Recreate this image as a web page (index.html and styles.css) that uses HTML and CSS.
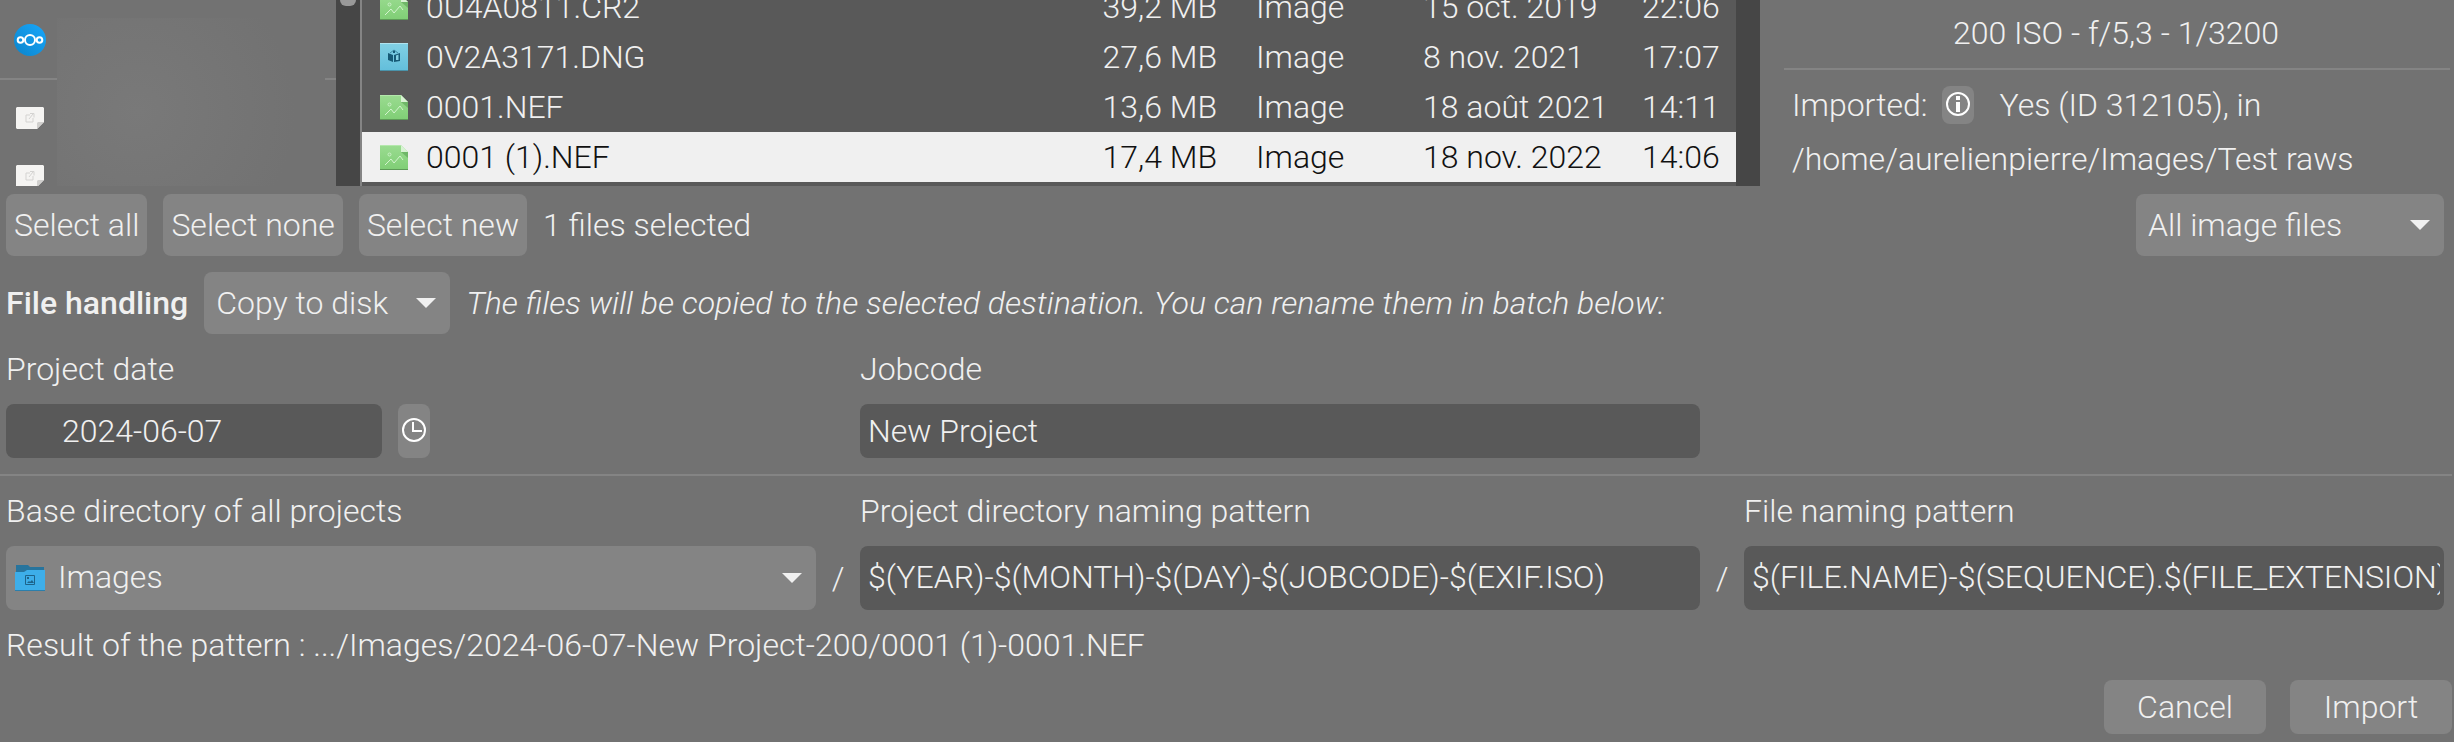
FILE: index.html
```
<!DOCTYPE html>
<html lang="en">
<head>
<meta charset="utf-8">
<title>Import</title>
<link rel="stylesheet" href="styles.css">
</head>
<body>
<svg class="defs" aria-hidden="true">
  <defs>
    <linearGradient id="green" x1="0" y1="0" x2="0" y2="1"><stop offset="0" stop-color="#9bdc91"/><stop offset="1" stop-color="#7fce75"/></linearGradient>
    <linearGradient id="cyan" x1="0" y1="0" x2="0" y2="1"><stop offset="0" stop-color="#82d0e4"/><stop offset="1" stop-color="#62bedb"/></linearGradient>
    <linearGradient id="cloud" x1="1" y1="0" x2="0" y2="1"><stop offset="0" stop-color="#18a7fb"/><stop offset="1" stop-color="#0b84cb"/></linearGradient>
    <symbol id="image-file" viewBox="0 0 28 25">
      <path fill="url(#green)" d="M0 0h21l7 7v18H0z"/>
      <path fill="#d8f3d3" d="M21 0l7 7h-7z"/>
      <path fill="#6fb768" d="M21 7h7v6z"/>
      <path fill="#b4e8ac" d="M0 0h21v1H0z"/>
      <path fill="#5d9a57" d="M0 24h28v1H0z"/>
      <circle cx="9.500" cy="9.500" r="1.500" fill="none" stroke="#c9f0c4"/>
      <path fill="none" stroke="#d3f4ce" d="M5 20l6-6 3 4 6-7 3 4"/>
    </symbol>
    <symbol id="raw-file" viewBox="0 0 28 28">
      <path fill="url(#cyan)" d="M0 0h28v28H0z"/>
      <path fill="#b0e3ef" d="M0 0h28v1H0z"/>
      <path fill="#4a93aa" d="M0 27h28v1H0z"/>
      <path fill="#165a76" d="M8 10l5 2v7l-5-2zM13 7h2v3h-2zM14 12l6-2v8l-6 1z"/>
      <path fill="#82cfe2" d="M16 12.500l2.500-1v5.500h-2.500z"/>
      <path stroke="#3e8ba4" d="M10 10l4-3 4 3" fill="none"/>
    </symbol>
    <symbol id="bookmark" viewBox="0 0 28 22">
      <path fill="#f5f4f2" d="M1 0h26l1 1v14l-7 7H1l-1-1V1z"/>
      <path fill="#d0cfcd" d="M28 15h-6l-1 1v6z"/>
      <path fill="none" stroke="#d4d3d1" d="M14 8h-4v7h7v-4M13 12l4-5M14 6.500h4v4"/>
    </symbol>
  </defs>
</svg>

<main class="dialog">
  <section class="browser">
    <aside class="places">
      <ul class="place-list">
        <li class="place place-cloud"><svg width="32" height="32" viewBox="0 0 32 32"><circle cx="16" cy="16" r="16" fill="url(#cloud)"/><g fill="none" stroke="#fff" stroke-width="2"><circle cx="16" cy="16" r="5"/><circle cx="6.500" cy="16" r="2.800"/><circle cx="25.500" cy="16" r="2.800"/></g></svg></li>
        <li class="place"><svg width="28" height="22"><use href="#bookmark"/></svg></li>
        <li class="place"><svg width="28" height="22"><use href="#bookmark"/></svg></li>
      </ul>
      <div class="redacted"></div>
      <div class="scrollbar"><span class="thumb"></span></div>
    </aside>
    <div class="files">
      <table class="file-table">
        <tbody>
          <tr><td class="icon"><svg width="28" height="25"><use href="#image-file"/></svg></td><td>0U4A0811.CR2</td><td class="size">39,2 MB</td><td class="type">Image</td><td class="date">15 oct. 2019</td><td class="time">22:06</td></tr>
          <tr><td class="icon"><svg width="28" height="28"><use href="#raw-file"/></svg></td><td>0V2A3171.DNG</td><td class="size">27,6 MB</td><td class="type">Image</td><td class="date">8 nov. 2021</td><td class="time">17:07</td></tr>
          <tr><td class="icon"><svg width="28" height="25"><use href="#image-file"/></svg></td><td>0001.NEF</td><td class="size">13,6 MB</td><td class="type">Image</td><td class="date">18 août 2021</td><td class="time">14:11</td></tr>
          <tr class="selected"><td class="icon"><svg width="28" height="25"><use href="#image-file"/></svg></td><td>0001 (1).NEF</td><td class="size">17,4 MB</td><td class="type">Image</td><td class="date">18 nov. 2022</td><td class="time">14:06</td></tr>
        </tbody>
      </table>
      <div class="scrollbar"></div>
    </div>
    <aside class="details">
      <p class="exposure">200 ISO - f/5,3 - 1/3200</p>
      <hr class="rule">
      <div class="imported">
        <span>Imported:</span>
        <button class="btn info" type="button" aria-label="Information"><svg width="24" height="24" viewBox="0 0 24 24"><circle cx="12" cy="12" r="11" fill="none" stroke="#fff" stroke-width="2"/><path fill="#fff" d="M10 4h4v4h-4zM10 10h4v10h-4z"/></svg></button>
        <span class="yes">Yes (ID 312105), in</span>
      </div>
      <p class="path">/home/aurelienpierre/Images/Test raws</p>
    </aside>
  </section>

  <section class="bar">
    <button class="btn" type="button">Select all</button>
    <button class="btn" type="button">Select none</button>
    <button class="btn" type="button">Select new</button>
    <span class="count">1 files selected</span>
    <select class="combo filter" aria-label="File type"><option>All image files</option></select>
  </section>

  <section class="bar handling">
    <label class="heading" for="mode">File handling</label>
    <select class="combo mode" id="mode"><option>Copy to disk</option></select>
    <em class="hint">The files will be copied to the selected destination. You can rename them in batch below:</em>
  </section>

  <section class="grid">
    <label class="label col-1" for="date">Project date</label>
    <label class="label col-3" for="job">Jobcode</label>
    <div class="date-field col-1">
      <input class="entry date-entry" id="date" type="text" value="2024-06-07">
      <button class="btn clock" type="button" aria-label="Choose date"><svg width="24" height="24" viewBox="0 0 24 24" fill="none" stroke="#fff" stroke-width="2"><circle cx="12" cy="12" r="11"/><path d="M11 4v9h9"/></svg></button>
    </div>
    <input class="entry col-3" id="job" type="text" value="New Project">
  </section>

  <hr class="rule wide">

  <section class="grid patterns">
    <label class="label col-1" for="base">Base directory of all projects</label>
    <label class="label col-3" for="dir">Project directory naming pattern</label>
    <label class="label col-5" for="file">File naming pattern</label>
    <div class="folder-field col-1">
      <select class="combo folder" id="base"><option>Images</option></select>
      <svg class="folder-icon" width="30" height="26" viewBox="0 0 30 26"><path fill="#27749d" d="M1 0h12l2 2h14v6H1z"/><path fill="#3daee9" d="M0 7h9l3-2h18v21H0z"/><path fill="#2b7fac" d="M0 25h30v1H0z"/><path fill="none" stroke="#1d638a" d="M10.500 10.500h9v9h-9z"/><path fill="#1d638a" d="M12 18l2-2 1 1 2-2 2 3zM12 12h2v2h-2z"/></svg>
    </div>
    <span class="slash">/</span>
    <input class="entry tall" id="dir" type="text" value="$(YEAR)-$(MONTH)-$(DAY)-$(JOBCODE)-$(EXIF.ISO)">
    <span class="slash">/</span>
    <input class="entry tall file-pattern" id="file" type="text" value="$(FILE.NAME)-$(SEQUENCE).$(FILE_EXTENSION)">
  </section>

  <p class="result">Result of the pattern : .../Images/2024-06-07-New Project-200/0001 (1)-0001.NEF</p>

  <footer class="actions">
    <button class="btn action" type="button">Cancel</button>
    <button class="btn action" type="button">Import</button>
  </footer>
</main>
</body>
</html>
```

FILE: styles.css
```
* { box-sizing: border-box; }

body {
  margin: 0;
  background: #727272;
  color: #f0f0f0;
  font: 300 32px/38px Roboto, "Noto Sans", sans-serif;
  overflow: hidden;
}

p, ul, hr { margin: 0; padding: 0; }
ul { list-style: none; }
svg { display: block; }
.defs { position: absolute; width: 0; height: 0; }

button, input, select { font: inherit; color: inherit; border: 0; margin: 0; }

.browser {
  display: grid;
  grid-template-columns: 360px minmax(0, 1fr) 670px;
  column-gap: 24px;
  height: 186px;
  overflow: hidden;
}

/* places sidebar */
.places {
  display: grid;
  grid-template-columns: 57px 1fr 24px;
  height: 186px;
  background: linear-gradient(#848484, #848484) 0 78px / 100% 2px no-repeat;
}
.place { padding: 18px 0 18px 16px; height: 58px; }
.place-cloud { height: 89px; padding: 24px 0 0 14px; }
.redacted {
  margin: 18px 11px 0 0;
  background: radial-gradient(circle at 30% 50%, #797979, #727272 75%);
}
.scrollbar { background: #464646; width: 24px; }
.thumb {
  display: block;
  width: 16px;
  height: 6px;
  margin: 0 auto;
  border-radius: 0 0 8px 8px;
  background: #999;
}

/* file list */
.files {
  display: flex;
  align-items: flex-end;
  margin-left: -24px;
  height: 186px;
  background: #595959;
  border-left: 2px solid #848484;
}
.files .scrollbar { flex: none; height: 186px; }
.file-table {
  flex: 1;
  border-collapse: collapse;
  table-layout: fixed;
  margin-bottom: 4px;
}
.file-table td { height: 50px; padding: 0; white-space: nowrap; }
.file-table .icon { width: 64px; padding-left: 18px; }
.file-table .size { width: 150px; text-align: right; }
.file-table .type { width: 206px; padding-left: 39px; }
.file-table .date { width: 219px; }
.file-table .time { width: 94px; }
.selected { background: #f0f0f0; color: #111; }

/* details */
.exposure { padding-top: 14px; text-align: center; margin-right: 6px; }
.rule { height: 2px; border: 0; background: #848484; }
.details .rule { margin: 16px 4px 0 0; }
.imported { display: flex; align-items: center; padding: 16px 0 0 8px; }
.path { padding: 16px 0 0 8px; }

.btn {
  display: flex;
  align-items: center;
  justify-content: center;
  background: #848484;
  border-radius: 8px;
  padding: 0 8px;
  height: 62px;
}
.btn.info { width: 32px; height: 38px; margin: 0 26px 0 14px; padding: 0 0 2px; }
.btn.clock { width: 32px; height: 54px; padding: 0 0 2px; }

.combo {
  appearance: none;
  height: 62px;
  padding: 0 12px;
  border-radius: 8px;
  background: #848484 url("data:image/svg+xml,%3Csvg xmlns='http://www.w3.org/2000/svg' viewBox='0 0 20 10'%3E%3Cpath fill='%23f0f0f0' d='M0 0h20L10 10z'/%3E%3C/svg%3E") right 14px center / 20px 10px no-repeat;
}

.bar { display: flex; align-items: center; gap: 16px; padding: 8px 10px 0 6px; }
.handling { padding-top: 16px; }
.filter { width: 308px; margin-left: auto; }
.mode { width: 246px; }
.heading { font-weight: 500; }

/* forms */
.grid {
  display: grid;
  grid-template-columns: 810px 44px 840px 44px minmax(0, 1fr);
  row-gap: 16px;
  padding: 16px 10px 0 6px;
  align-items: center;
}
.col-1 { grid-column: 1; }
.col-3 { grid-column: 3; }
.col-5 { grid-column: 5; }
.entry {
  width: 100%;
  height: 54px;
  padding: 0 8px;
  border-radius: 8px;
  background: #595959;
}
.date-field { display: flex; gap: 16px; }
.date-entry { width: 376px; padding-left: 56px; }
.folder-field { position: relative; }
.folder { width: 100%; padding-left: 52px; }
.folder, .tall { height: 64px; padding-bottom: 2px; }
.file-pattern { padding-right: 4px; }
.folder-icon { position: absolute; left: 9px; top: 19px; }
.slash { text-align: center; }
.wide { margin: 16px 2px 0 0; }
.result { padding: 16px 6px 0; }
.actions { display: flex; justify-content: flex-end; gap: 24px; padding: 16px 2px 8px 0; }
.action { width: 162px; height: 54px; }
```
